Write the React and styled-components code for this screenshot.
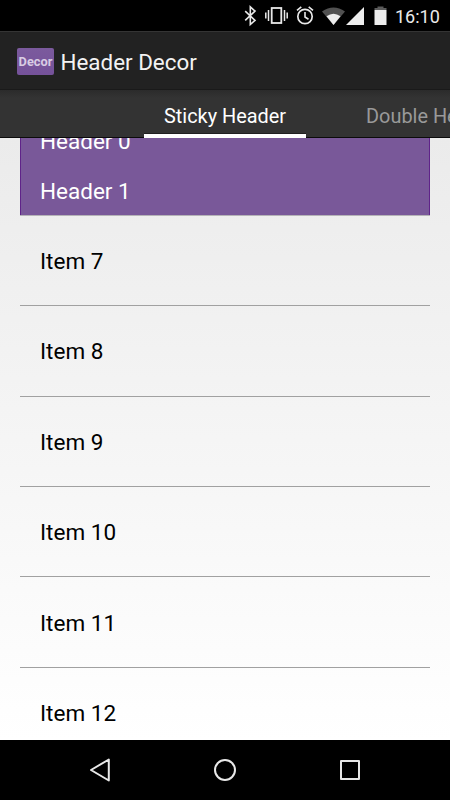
import React from 'react';
import styled, { createGlobalStyle } from 'styled-components';

const Global = createGlobalStyle`
  * { box-sizing: border-box; }
  body { margin: 0; background: #000; font-family: Roboto, "Liberation Sans", sans-serif; }
`;

const Screen = styled.div`
  width: 450px;
  height: 800px;
  overflow: hidden;
  display: flex;
  flex-direction: column;
  background: #000;
`;

const StatusBar = styled.header`
  flex: 0 0 31px;
  height: 31px;
  min-height: 0;
  display: flex;
  background: #000;
`;

const StatusIcons = styled.svg`
  flex: none;
  margin-left: 240px;
  width: 150px;
  height: 31px;
`;

const Clock = styled.time`
  margin-left: 5px;
  padding-top: 1px;
  font-size: 18px;
  line-height: 31px;
  color: #ebebeb;
  white-space: nowrap;
`;

const ActionBar = styled.div`
  flex: 0 0 59px;
  display: flex;
  align-items: center;
  padding: 0 0 0 17px;
  background: #222;
  border-top: 1px solid #343434;
  border-bottom: 1px solid #1a1a1a;
`;

const Logo = styled.div`
  width: 37px;
  height: 27px;
  margin-top: 1px;
  border-radius: 2px;
  background: linear-gradient(#7b5a9d, #75529a);
  color: #d9cce4;
  font-size: 12.8px;
  font-weight: 700;
  line-height: 27px;
  text-align: center;
`;

const Title = styled.h1`
  margin: 2px 0 0 6.5px;
  font-size: 22.4px;
  font-weight: 400;
  line-height: 30px;
  color: #f3f3f3;
  white-space: nowrap;
`;

const Tabs = styled.nav`
  flex: 0 0 48px;
  display: flex;
  gap: 40px;
  padding-left: 144px;
  overflow: hidden;
  background: linear-gradient(#2b2b2b, #333 8px);
  box-shadow: inset 0 -1px #0b0b0b;
`;

const Tab = styled.div`
  flex: none;
  height: 48px;
  padding: 2px 20px 0;
  font-size: 19.9px;
  line-height: 49px;
  white-space: nowrap;
  color: ${({ $active }) => ($active ? '#fff' : '#999')};
  box-shadow: ${({ $active }) => ($active ? 'inset 0 -4px #fff, inset 0 -5px #202020' : 'none')};
`;

const List = styled.main`
  flex: 0 0 602px;
  padding: 0 20px;
  overflow: hidden;
  background: linear-gradient(#ebebeb, #fff);
`;

const StickyHeader = styled.section`
  height: 77px;
  margin-bottom: 0.8px;
  overflow: hidden;
  display: flex;
  flex-direction: column;
  justify-content: flex-end;
  background: #795899;
  border: solid #5f2389;
  border-width: 0 1px;
  box-shadow: 0 1px #b5b3b7;
`;

const HeaderLine = styled.div`
  flex: none;
  height: 50px;
  padding-left: 19px;
  font-size: 22.5px;
  line-height: 53px;
  color: #fff;
`;

const Item = styled.div`
  height: 90.4px;
  padding: 1.2px 20px 0;
  font-size: 22.5px;
  line-height: 88px;
  color: #000;
  border-bottom: 1px solid #a1a1a1;
`;

const NavBar = styled.footer`
  flex: 0 0 60px;
  background: #000;
`;

const NavIcons = styled.svg`
  display: block;
  width: 450px;
  height: 60px;
`;

const items = [7, 8, 9, 10, 11, 12];

export default function App() {
  return (
    <Screen>
      <Global />
      <StatusBar>
        <StatusIcons viewBox="240 0 150 31" fill="none" stroke="#e8e8e8">
          <path d="M245.2 11.2 255 20.4l-4.7 4.1V6.8l4.7 4.3-9.8 9.3" strokeWidth="1.6" />
          <rect x="271.7" y="8" width="9.6" height="15" strokeWidth="1.8" />
          <path d="M268.5 10v11M284.5 10v11M265.8 12.5v6M287.2 12.5v6" strokeWidth="1.5" />
          <circle cx="305" cy="16.5" r="7.2" strokeWidth="1.7" />
          <path d="M305 12v5l3.5 2.2M297 10.4l4.3-3.6M313 10.4l-4.3-3.6" strokeWidth="1.6" />
          <path d="M322 11.6Q333.5 3.6 345 11.6L333.5 25Z" fill="#515151" stroke="none" />
          <path d="M326.5 16.3Q333.5 11 340.5 16.3L333.5 25Z" fill="#ededed" stroke="none" />
          <path d="M364 7v18h-18Z" fill="#ededed" stroke="none" />
          <path d="M374.5 10h12v15h-12Z" fill="#ededed" stroke="none" />
          <path d="M374.5 10V8h3V6.4h6V8h3v2Z" fill="#5b5b5b" stroke="none" />
        </StatusIcons>
        <Clock>16:10</Clock>
      </StatusBar>
      <ActionBar>
        <Logo>Decor</Logo>
        <Title>Header Decor</Title>
      </ActionBar>
      <Tabs>
        <Tab $active>Sticky Header</Tab>
        <Tab>Double Header</Tab>
      </Tabs>
      <List>
        <StickyHeader>
          <HeaderLine>Header 0</HeaderLine>
          <HeaderLine>Header 1</HeaderLine>
        </StickyHeader>
        {items.map((n) => (
          <Item key={n}>Item {n}</Item>
        ))}
      </List>
      <NavBar>
        <NavIcons viewBox="0 0 450 60" fill="none" stroke="#e8e8e8" strokeWidth="2" strokeLinejoin="round">
          <path d="M108.8 19.5v21L91 30Z" />
          <circle cx="225" cy="30" r="10" />
          <rect x="341" y="21" width="18" height="18" />
        </NavIcons>
      </NavBar>
    </Screen>
  );
}
